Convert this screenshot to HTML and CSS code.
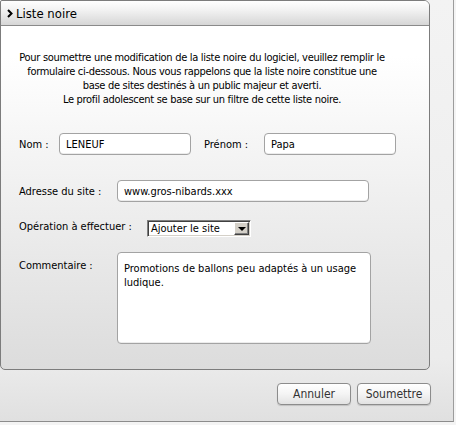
FILE: index.html
```html
<!DOCTYPE html>
<html lang="fr">
<head>
    <meta charset="UTF-8">
    <title>Liste noire</title>
    <link rel="stylesheet" href="styles.css">
</head>
<body>
    <div class="window">
        <div class="panel">
            <div class="panel-head">
                <svg class="chevron" width="8" height="9" viewBox="0 0 8 9"><path d="M2 1 L5.5 4.5 L2 8" fill="none" stroke="#000" stroke-width="2"/></svg>
                <span>Liste noire</span>
            </div>
            <div class="panel-body">
                <p class="intro">
                    Pour soumettre une modification de la liste noire du logiciel, veuillez remplir le<br>
                    formulaire ci-dessous. Nous vous rappelons que la liste noire constitue une<br>
                    base de sites destinés à un public majeur et averti.<br>
                    Le profil adolescent se base sur un filtre de cette liste noire.
                </p>

                <div class="row row-name">
                    <label class="lbl lbl-nom">Nom :</label>
                    <input type="text" class="field field-short" value="LENEUF">
                    <label class="lbl lbl-prenom">Prénom :</label>
                    <input type="text" class="field field-short" value="Papa">
                </div>

                <div class="row row-site">
                    <label class="lbl lbl-wide">Adresse du site :</label>
                    <input type="text" class="field field-long" value="www.gros-nibards.xxx">
                </div>

                <div class="row row-op">
                    <label class="lbl lbl-op">Opération à effectuer :</label>
                    <div class="select">
                        <span class="select-text">Ajouter le site</span>
                        <span class="select-btn"><span class="arrow"></span></span>
                    </div>
                </div>

                <div class="row row-comment">
                    <label class="lbl lbl-wide">Commentaire :</label>
                    <textarea class="field comment">Promotions de ballons peu adaptés à un usage ludique.</textarea>
                </div>
            </div>
        </div>

        <div class="actions">
            <button class="btn">Annuler</button>
            <button class="btn">Soumettre</button>
        </div>
    </div>
</body>
</html>
```

FILE: styles.css
```css
body {
    margin: 0;
    font-family: "DejaVu Sans Condensed", "DejaVu Sans", sans-serif;
    font-size: 11px;
    color: #000;
    background: #f4f4f4;
}

.window {
    width: 453px;
    height: 421px;
    border-right: 1px solid #9c9c9c;
    border-bottom: 1px solid #8c8c8c;
    background: linear-gradient(to bottom, #f3f3f3, #ececec 85%, #e0e0e0);
    display: flex;
    flex-direction: column;
}

.panel {
    width: 430px;
    height: 370px;
    box-sizing: border-box;
    border: 1px solid #7c7c7c;
    border-radius: 2px 6px 5px 5px;
    background: linear-gradient(to bottom, #ffffff 0%, #ffffff 15%, #dcdcdc 100%);
    display: flex;
    flex-direction: column;
}

.panel-head {
    height: 24px;
    border-bottom: 1px solid #8a8a8a;
    border-radius: 2px 5px 0 0;
    background: linear-gradient(to bottom, #ffffff, #f1f1f1 40%, #d6d6d6);
    display: flex;
    align-items: center;
    font-size: 13px;
    padding-left: 5px;
    gap: 2px;
}

.chevron {
    display: block;
}

.panel-body {
    padding: 25px 0 0 18px;
}

.intro {
    margin: 0;
    width: 366px;
    text-align: center;
    line-height: 14px;
    letter-spacing: -0.3px;
    white-space: nowrap;
}

.row {
    display: flex;
    align-items: center;
}

.row-name {
    margin-top: 26px;
}

.row-site {
    margin-top: 25px;
}

.row-op {
    margin-top: 18px;
}

.row-comment {
    margin-top: 15px;
    align-items: flex-start;
}

.lbl {
    flex: none;
}

.lbl-nom {
    width: 40px;
}

.lbl-prenom {
    width: 60px;
    margin-left: 13px;
}

.lbl-wide {
    width: 98px;
}

.lbl-op {
    width: 128px;
    margin-top: -4px;
}

.row-comment .lbl {
    margin-top: 7px;
}

.field {
    box-sizing: border-box;
    height: 22px;
    border: 1px solid #a3a3a3;
    border-radius: 4px;
    background: #fff;
    box-shadow: inset 0 -1px 0 #ececec;
    font-family: inherit;
    font-size: 11px;
    color: #000;
    padding: 0 6px;
    margin: 0;
    outline: none;
}

.field-short {
    width: 132px;
}

.field-long {
    width: 252px;
}

.comment {
    width: 254px;
    height: 92px;
    padding: 9px 6px;
    line-height: 14px;
    resize: none;
    overflow: hidden;
}

.select {
    box-sizing: border-box;
    width: 104px;
    height: 17px;
    display: flex;
    align-items: center;
    background: #fff;
    border: 1px solid;
    border-color: #7f7f7f #ffffff #ffffff #7f7f7f;
    box-shadow: inset 1px 1px 0 #404040, inset -1px -1px 0 #d4d0c8;
    font-size: 11px;
}

.select-text {
    flex: 1;
    padding-left: 3px;
    line-height: 15px;
}

.select-btn {
    box-sizing: border-box;
    width: 15px;
    height: 13px;
    margin-right: 1px;
    background: #d4d0c8;
    border: 1px solid;
    border-color: #ffffff #404040 #404040 #ffffff;
    box-shadow: inset -1px -1px 0 #808080;
    display: flex;
    align-items: center;
    justify-content: center;
}

.arrow {
    width: 0;
    height: 0;
    border-left: 4px solid transparent;
    border-right: 4px solid transparent;
    border-top: 4px solid #000;
    margin-left: 1px;
}

.actions {
    display: flex;
    justify-content: flex-end;
    gap: 6px;
    padding: 13px 22px 0 0;
}

.btn {
    box-sizing: border-box;
    width: 74px;
    height: 22px;
    border: 1px solid #8c8c8c;
    border-radius: 4px;
    background: linear-gradient(to bottom, #ffffff, #f4f4f4 50%, #e2e2e2);
    box-shadow: 0 1px 1px rgba(0,0,0,0.15);
    font-family: inherit;
    font-size: 12px;
    color: #333;
    padding: 0;
    cursor: pointer;
}
```
